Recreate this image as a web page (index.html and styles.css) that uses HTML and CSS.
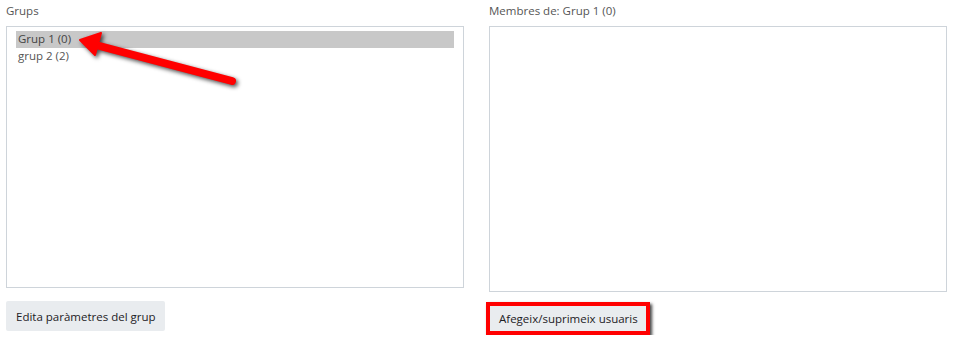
FILE: index.html
```html
<!DOCTYPE html>
<html lang="ca">
<head>
    <meta charset="UTF-8">
    <meta name="viewport" content="width=device-width, initial-scale=1.0">
    <title>Grups</title>
    <link rel="stylesheet" href="styles.css">
</head>
<body>
    <div class="groups-page">
        <div class="column">
            <label class="field-label">Grups</label>
            <div class="listbox listbox-groups">
                <div class="option selected">Grup 1 (0)</div>
                <div class="option">grup 2 (2)</div>
            </div>
            <div class="actions">
                <button class="btn">Edita paràmetres del grup</button>
            </div>
        </div>

        <div class="column">
            <label class="field-label">Membres de: Grup 1 (0)</label>
            <div class="listbox listbox-members"></div>
            <div class="actions actions-members">
                <span class="highlight">
                    <button class="btn btn-small">Afegeix/suprimeix usuaris</button>
                </span>
            </div>
        </div>

        <!-- annotation arrow -->
        <svg class="arrow" width="260" height="100" viewBox="0 0 260 100">
            <g fill="#f00" stroke="#f00" stroke-linejoin="round">
                <line x1="92" y1="44" x2="232" y2="81" stroke-width="8" stroke-linecap="round"/>
                <polygon points="80,40 101,33 95,55" stroke-width="2"/>
            </g>
        </svg>
    </div>
</body>
</html>
```

FILE: styles.css
```css
body {
    margin: 0;
    font-family: "Open Sans", "Noto Sans", sans-serif;
    font-size: 11.5px;
    color: #495057;
    background: #fff;
}
.groups-page {
    position: relative;
    display: flex;
    gap: 25px;
    padding: 0 6px;
}
.column {
    width: 458px;
    display: flex;
    flex-direction: column;
}
.field-label {
    display: block;
    height: 26px;
    line-height: 22px;
    color: #555;
}
.listbox {
    box-sizing: border-box;
    border: 1px solid #ced4da;
    padding: 4px 9px;
}
.listbox-groups {
    height: 262px;
}
.listbox-members {
    height: 266px;
}
.option {
    height: 17px;
    line-height: 16px;
    padding-left: 2px;
    color: #555;
}
.option.selected {
    background-color: #c8c8c8;
    color: #444;
}
.actions {
    padding-top: 13px;
}
.actions-members {
    padding-top: 10px;
}
.btn {
    font-family: inherit;
    font-size: 11.5px;
    color: #1d2125;
    background-color: #e9ecef;
    border: none;
    border-radius: 2px;
    height: 30px;
    padding: 0 9px 0 10px;
    cursor: pointer;
}
.highlight {
    display: inline-block;
    margin-left: -3px;
    border: 4px solid #f00;
    box-shadow: 2px 2px 3px rgba(0, 0, 0, 0.75), inset 0 0 0 1px #444;
}
.btn-small {
    height: 25px;
    padding: 0 8px 0 9px;
    border-radius: 0;
    vertical-align: top;
}
.arrow {
    position: absolute;
    left: 0;
    top: 0;
    filter: drop-shadow(2px 2px 2px rgba(0, 0, 0, 0.7));
}
```
